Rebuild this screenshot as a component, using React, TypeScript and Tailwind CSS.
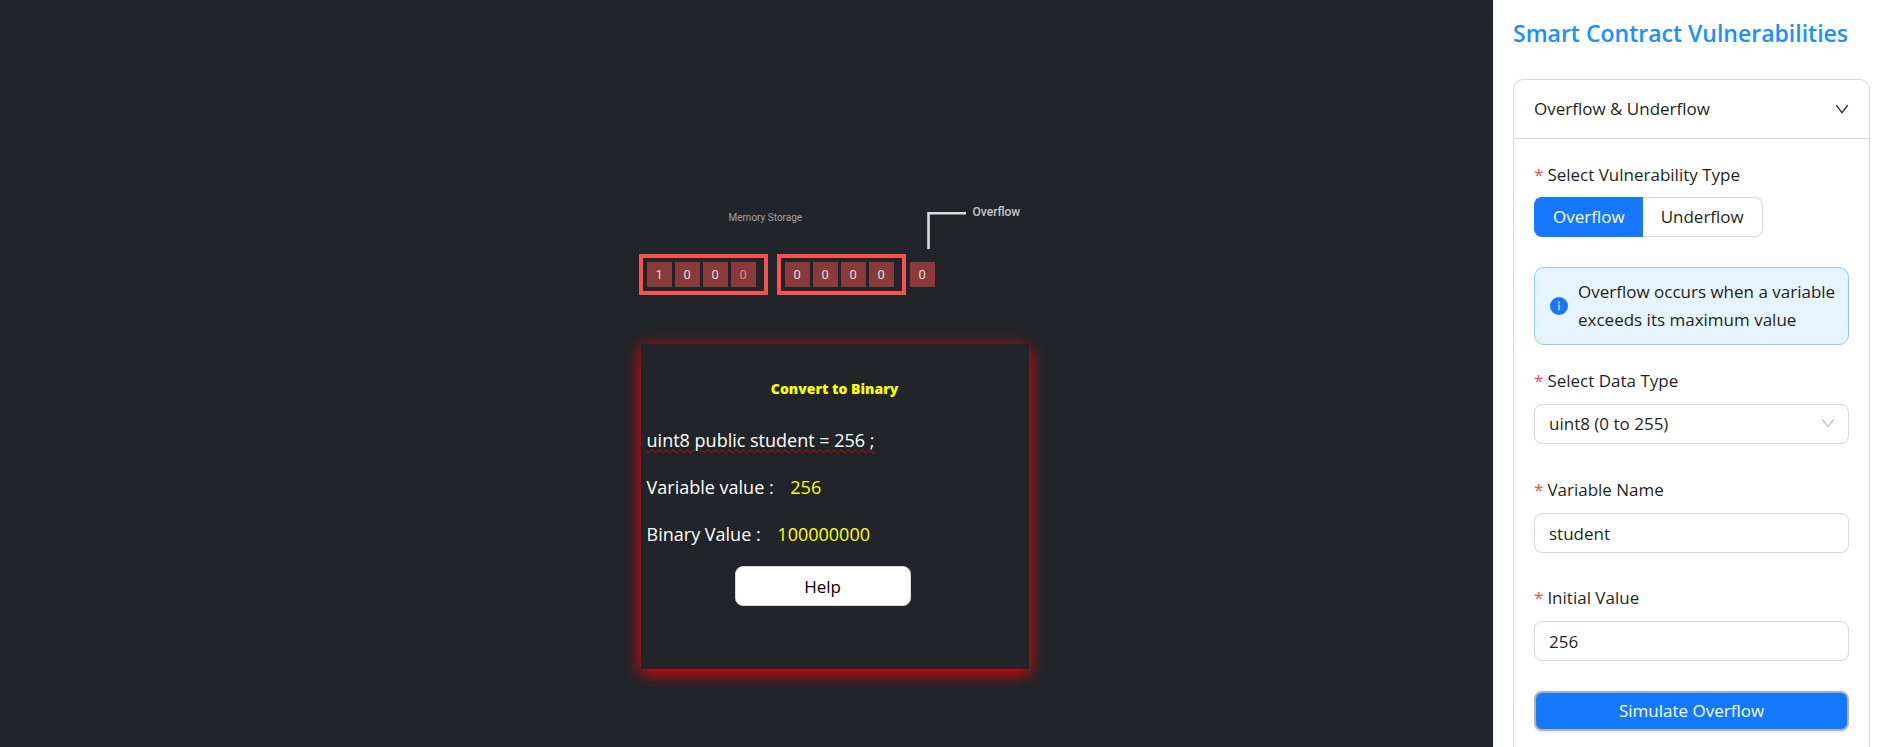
import { useState, type ReactNode } from "react";

const DATA_TYPES = ["uint8 (0 to 255)", "uint16 (0 to 65535)", "int8 (-128 to 127)"];

function Chevron({ className }: { className: string }) {
  return (
    <svg viewBox="0 0 14 14" fill="none" stroke="currentColor" aria-hidden="true" className={className}>
      <path d="M1.2 3.2 7 10.6l5.8-7.4" strokeWidth="1.3" />
    </svg>
  );
}

function InfoIcon() {
  return (
    <svg viewBox="0 0 18 18" aria-hidden="true" className="size-[18px] shrink-0">
      <circle cx="9" cy="9" r="9" fill="#1677ff" />
      <circle cx="9" cy="5.4" r="0.9" fill="#fff" />
      <path d="M9 7.6v5.6" stroke="#fff" strokeWidth="1.2" />
    </svg>
  );
}

function Bit({ value, dim = false }: { value: string; dim?: boolean }) {
  return (
    <span
      className={`flex size-[25px] items-center justify-center bg-[#8a3a3b] text-[13px] ${
        dim ? "text-[#d98a8c]" : "text-[#dedede]"
      }`}
    >
      {value}
    </span>
  );
}

function Nibble({ bits, dimLast = false }: { bits: string; dimLast?: boolean }) {
  return (
    <div className="flex gap-[3px] border-4 border-[#f9514f] py-1 pr-2 pl-1">
      {bits.split("").map((bit, i) => (
        <Bit key={i} value={bit} dim={dimLast && i === bits.length - 1} />
      ))}
    </div>
  );
}

function Memory() {
  return (
    <section className="font-[Roboto,sans-serif]">
      <div className="flex h-[52px] items-start">
        <p className="mt-[6px] ml-[90px] w-[198px] text-[10px] leading-5 text-[#a0a2a4]">Memory Storage</p>
        <svg viewBox="0 0 40 40" fill="none" aria-hidden="true" className="mt-2 h-10 w-10">
          <path d="M1.5 39V3.2H39" stroke="#dcdcdc" strokeWidth="2.6" />
        </svg>
        <p className="ml-[6px] text-[12px] leading-5 font-medium text-[#c4c5c6]">Overflow</p>
      </div>
      <div className="flex items-center">
        <Nibble bits="1000" dimLast />
        <div className="ml-[9px]">
          <Nibble bits="0000" />
        </div>
        <div className="ml-1">
          <Bit value="0" />
        </div>
      </div>
    </section>
  );
}

function BinaryPanel() {
  return (
    <section className="mt-[49px] ml-[2px] h-[325px] bg-[#212529] px-[6px] pt-[31px] text-[18px] leading-[27px] text-white shadow-[0_4px_15px_#f00]">
      <h2 className="text-center text-[14px] leading-[27px] font-extrabold text-[#ff0]">Convert to Binary</h2>
      <p className="mt-[25px] underline decoration-[#d00000] decoration-wavy decoration-1 underline-offset-2">
        uint8 public student = 256 ;
      </p>
      <p className="mt-5">
        Variable value : <span className="ml-3 text-[#ff0]">256</span>
      </p>
      <p className="mt-5">
        Binary Value : <span className="ml-3 text-[#ff0]">100000000</span>
      </p>
      <button
        type="button"
        className="mt-[18px] ml-[88px] block h-10 w-44 rounded-lg border border-[#d9d9d9] bg-white text-[17px] text-black"
      >
        Help
      </button>
    </section>
  );
}

function FieldLabel({ htmlFor, children }: { htmlFor: string; children: ReactNode }) {
  return (
    <label htmlFor={htmlFor} className="flex h-[27px] gap-1 leading-[27px]">
      <span className="text-[#ff4d4f]">*</span>
      {children}
    </label>
  );
}

const fieldClass =
  "mt-[10px] block h-10 w-full appearance-none rounded-lg border border-[#d9d9d9] bg-white px-[14px] text-[#1f1f1f] outline-none";

export default function App() {
  const [kind, setKind] = useState("Overflow");
  const [dataType, setDataType] = useState(DATA_TYPES[0]);
  const [name, setName] = useState("student");
  const [initial, setInitial] = useState("256");

  return (
    <div className="flex h-screen overflow-hidden bg-[#212529] font-['Open_Sans',sans-serif]">
      <main className="grid min-w-0 flex-1 grid-cols-[11fr_390px_8fr]">
        <div className="col-start-2 pt-[202px]">
          <Memory />
          <BinaryPanel />
        </div>
      </main>

      <aside className="flex w-[388px] shrink-0 flex-col overflow-hidden bg-white pr-[11px] pl-5 text-[17px] text-[#1f1f1f]">
        <h1 className="mt-4 text-[23px] leading-[34px] font-semibold whitespace-nowrap text-[#1890ff]">
          Smart Contract Vulnerabilities
        </h1>
        <div className="mt-[29px] flex-1 rounded-t-[10px] border border-b-0 border-[#d9d9d9]">
          <button
            type="button"
            aria-expanded="true"
            className="flex h-[59px] w-full items-center justify-between border-b border-[#d9d9d9] px-5"
          >
            Overflow &amp; Underflow
            <Chevron className="size-[14px]" />
          </button>

          <form className="px-5 pt-[22px]" onSubmit={(e) => e.preventDefault()}>
            <fieldset>
              <legend className="flex h-[27px] gap-1 leading-[27px]">
                <span className="text-[#ff4d4f]">*</span>
                Select Vulnerability Type
              </legend>
              <div className="mt-[9px] flex">
                {["Overflow", "Underflow"].map((option) => (
                  <label
                    key={option}
                    className={`flex h-10 items-center border px-[18px] first:rounded-l-lg first:border-r-0 last:rounded-r-lg last:border-l-0 ${
                      kind === option ? "border-[#1677ff] bg-[#1677ff] text-white" : "border-[#d9d9d9] bg-white"
                    }`}
                  >
                    <input
                      type="radio"
                      name="kind"
                      value={option}
                      checked={kind === option}
                      onChange={() => setKind(option)}
                      className="sr-only"
                    />
                    {option}
                  </label>
                ))}
              </div>
            </fieldset>

            <div
              role="note"
              className="mt-[30px] flex items-center gap-[10px] rounded-[10px] border border-[#91caff] bg-[#e6f4ff] pt-[10px] pr-[10px] pb-[10px] pl-[15px] leading-7"
            >
              <InfoIcon />
              <p>Overflow occurs when a variable exceeds its maximum value</p>
            </div>

            <div className="mt-[22px]">
              <FieldLabel htmlFor="data-type">Select Data Type</FieldLabel>
              <div className="relative">
                <select
                  id="data-type"
                  value={dataType}
                  onChange={(e) => setDataType(e.target.value)}
                  className={fieldClass}
                >
                  {DATA_TYPES.map((t) => (
                    <option key={t}>{t}</option>
                  ))}
                </select>
                <Chevron className="pointer-events-none absolute top-3 right-[14px] size-[14px] text-[#bfbfbf]" />
              </div>
            </div>

            <div className="mt-8">
              <FieldLabel htmlFor="variable-name">Variable Name</FieldLabel>
              <input
                id="variable-name"
                value={name}
                onChange={(e) => setName(e.target.value)}
                className={fieldClass}
              />
            </div>

            <div className="mt-[31px]">
              <FieldLabel htmlFor="initial-value">Initial Value</FieldLabel>
              <input
                id="initial-value"
                value={initial}
                onChange={(e) => setInitial(e.target.value)}
                className={fieldClass}
              />
            </div>

            <button
              type="submit"
              className="mt-[30px] h-10 w-full rounded-lg border-2 border-[#b0b0b0] bg-[#1677ff] text-white shadow-[0_2px_0_rgba(5,145,255,0.1)]"
            >
              Simulate Overflow
            </button>
          </form>
        </div>
      </aside>
    </div>
  );
}
